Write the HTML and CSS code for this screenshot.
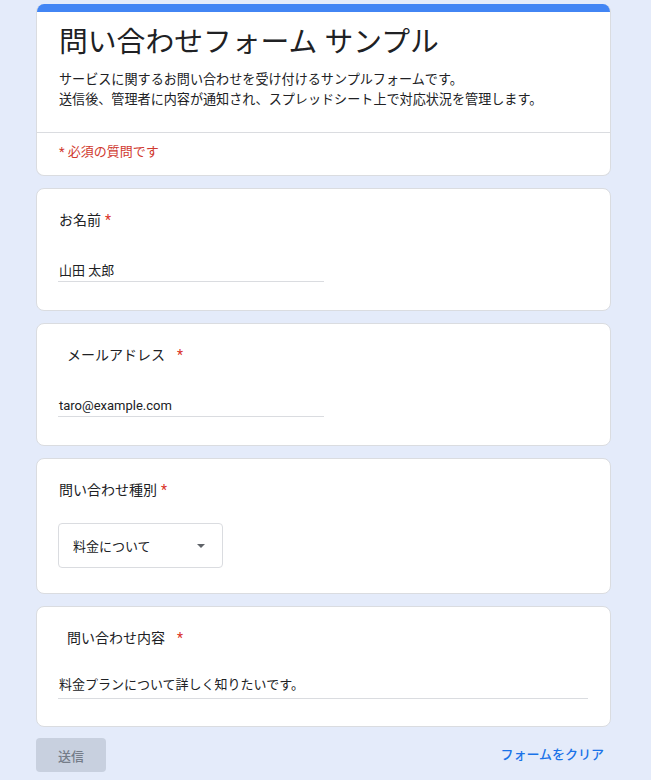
FILE: index.html
```html
<!DOCTYPE html>
<html lang="ja">
<head>
<meta charset="utf-8">
<title>問い合わせフォーム サンプル</title>
<link rel="stylesheet" href="styles.css">
</head>
<body>
<main class="form">
  <section class="card header-card">
    <div class="accent"></div>
    <div class="header-body">
      <h1 class="title">問い合わせフォーム サンプル</h1>
      <p class="desc">サービスに関するお問い合わせを受け付けるサンプルフォームです。<br>送信後、管理者に内容が通知され、スプレッドシート上で対応状況を管理します。</p>
    </div>
    <div class="required-note">* 必須の質問です</div>
  </section>

  <section class="card question">
    <div class="label">お名前<span class="req">*</span></div>
    <div class="input short">山田 太郎</div>
  </section>

  <section class="card question">
    <div class="label indented">メールアドレス<span class="req wide">*</span></div>
    <div class="input short">taro@example.com</div>
  </section>

  <section class="card question select-card">
    <div class="label">問い合わせ種別<span class="req">*</span></div>
    <div class="select"><span>料金について</span><span class="arrow"></span></div>
  </section>

  <section class="card question last">
    <div class="label indented">問い合わせ内容<span class="req wide">*</span></div>
    <div class="input long">料金プランについて詳しく知りたいです。</div>
  </section>

  <div class="actions">
    <button class="submit" type="button">送信</button>
    <a class="clear" href="#">フォームをクリア</a>
  </div>
</main>
</body>
</html>
```

FILE: styles.css
```css
* { box-sizing: border-box; }

body {
  margin: 0;
  background: #e4ebfa;
  font-family: "Roboto", "Noto Sans CJK JP", sans-serif;
  color: #202124;
}

.form {
  width: 611px;
  padding: 4px 0 0 36px;
  display: flex;
  flex-direction: column;
  gap: 12px;
}

.card {
  background: #fff;
  border: 1px solid #dadce0;
  border-radius: 8px;
  overflow: hidden;
}

.header-card { border-top: none; }

.accent {
  height: 8px;
  background: #4285f4;
}

.header-body {
  padding: 12px 22px 22px;
  border-bottom: 1px solid #dadce0;
}

.title {
  margin: 0;
  font-size: 28.8px;
  line-height: 36px;
  font-weight: 400;
}

.desc {
  margin: 10px 0 0;
  font-size: 13.1px;
  line-height: 20px;
}

.required-note {
  padding: 9px 22px 13px;
  font-size: 13px;
  line-height: 20px;
  color: #d0392e;
}

.question {
  padding: 21px 22px 28px;
}

.label {
  font-size: 14px;
  line-height: 20px;
}

.label.indented { padding-left: 8px; }

.req {
  color: #d93025;
  margin-left: 4px;
}

.req.wide { margin-left: 12px; }

.input {
  margin-top: 31px;
  font-size: 13px;
  line-height: 20px;
  border-bottom: 1px solid #dadce0;
}

.input.short { width: 266px; margin-left: -1px; padding-left: 1px; }

.select-card { padding-bottom: 25px; }

.select {
  margin-top: 23px;
  width: 165px;
  height: 45px;
  margin-left: -1px;
  border: 1px solid #dadce0;
  border-radius: 4px;
  display: flex;
  align-items: center;
  justify-content: space-between;
  padding: 0 17px 0 14px;
  font-size: 13px;
}

.arrow {
  width: 0;
  height: 0;
  border-left: 4px solid transparent;
  border-right: 4px solid transparent;
  border-top: 4px solid #5f6368;
}

.question.last { padding-bottom: 27px; }

.input.long {
  margin-top: 27px;
  padding-bottom: 3px;
  margin-left: -1px;
  padding-left: 1px;
}

.actions {
  display: flex;
  justify-content: space-between;
  align-items: center;
  padding-right: 7px;
  margin-top: -1px;
}

.submit {
  width: 70px;
  height: 34px;
  border: none;
  border-radius: 4px;
  background: #c8d0df;
  color: #757c88;
  font-family: "Roboto", "Noto Sans CJK JP", sans-serif;
  font-size: 13px;
  font-weight: 500;
}

.clear {
  color: #1a73e8;
  text-decoration: none;
  font-size: 13px;
  font-weight: 500;
  margin-top: -4px;
}
```
